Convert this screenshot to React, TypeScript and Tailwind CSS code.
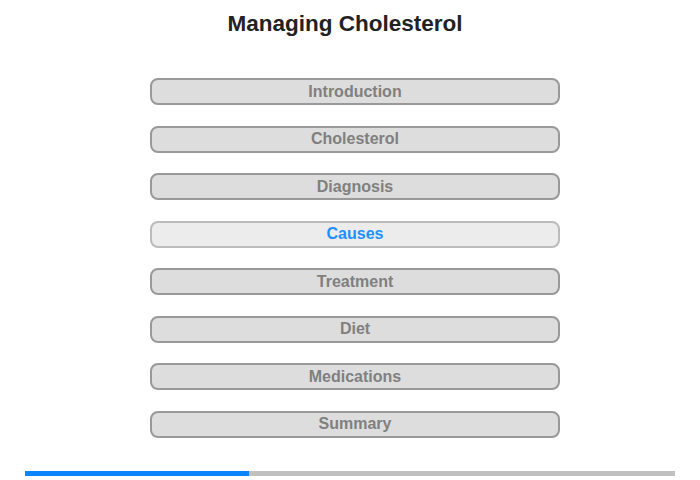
const SECTIONS = [
  'Introduction',
  'Cholesterol',
  'Diagnosis',
  'Causes',
  'Treatment',
  'Diet',
  'Medications',
  'Summary',
]

const ACTIVE = 'Causes'

export default function App() {
  return (
    <div className="flex h-[480px] w-[700px] flex-col bg-white font-['Liberation_Sans',Arial,sans-serif]">
      <h1 className="pr-[10px] pt-[11px] text-center text-[22.5px] font-bold leading-[26px] text-[#222]">
        Managing Cholesterol
      </h1>

      <div className="ml-[150px] mt-[41px] flex w-[410px] flex-col gap-[20.5px]">
        {SECTIONS.map((s) => {
          const active = s === ACTIVE
          return (
            <button
              key={s}
              className={
                active
                  ? 'h-[27px] rounded-[8px] border-2 border-[#bbb] bg-[#ececec] text-[16px] font-bold leading-[20px] text-[#1e90ff]'
                  : 'h-[27px] rounded-[8px] border-2 border-[#999] bg-[#ddd] text-[16px] font-bold leading-[20px] text-[#808080]'
              }
            >
              {s}
            </button>
          )
        })}
      </div>

      <div className="mx-[25px] mt-[33px] flex h-[5px] bg-[#c0c0c0]">
        <div className="h-full w-[224px] bg-[#0a84ff]" />
      </div>
    </div>
  )
}
